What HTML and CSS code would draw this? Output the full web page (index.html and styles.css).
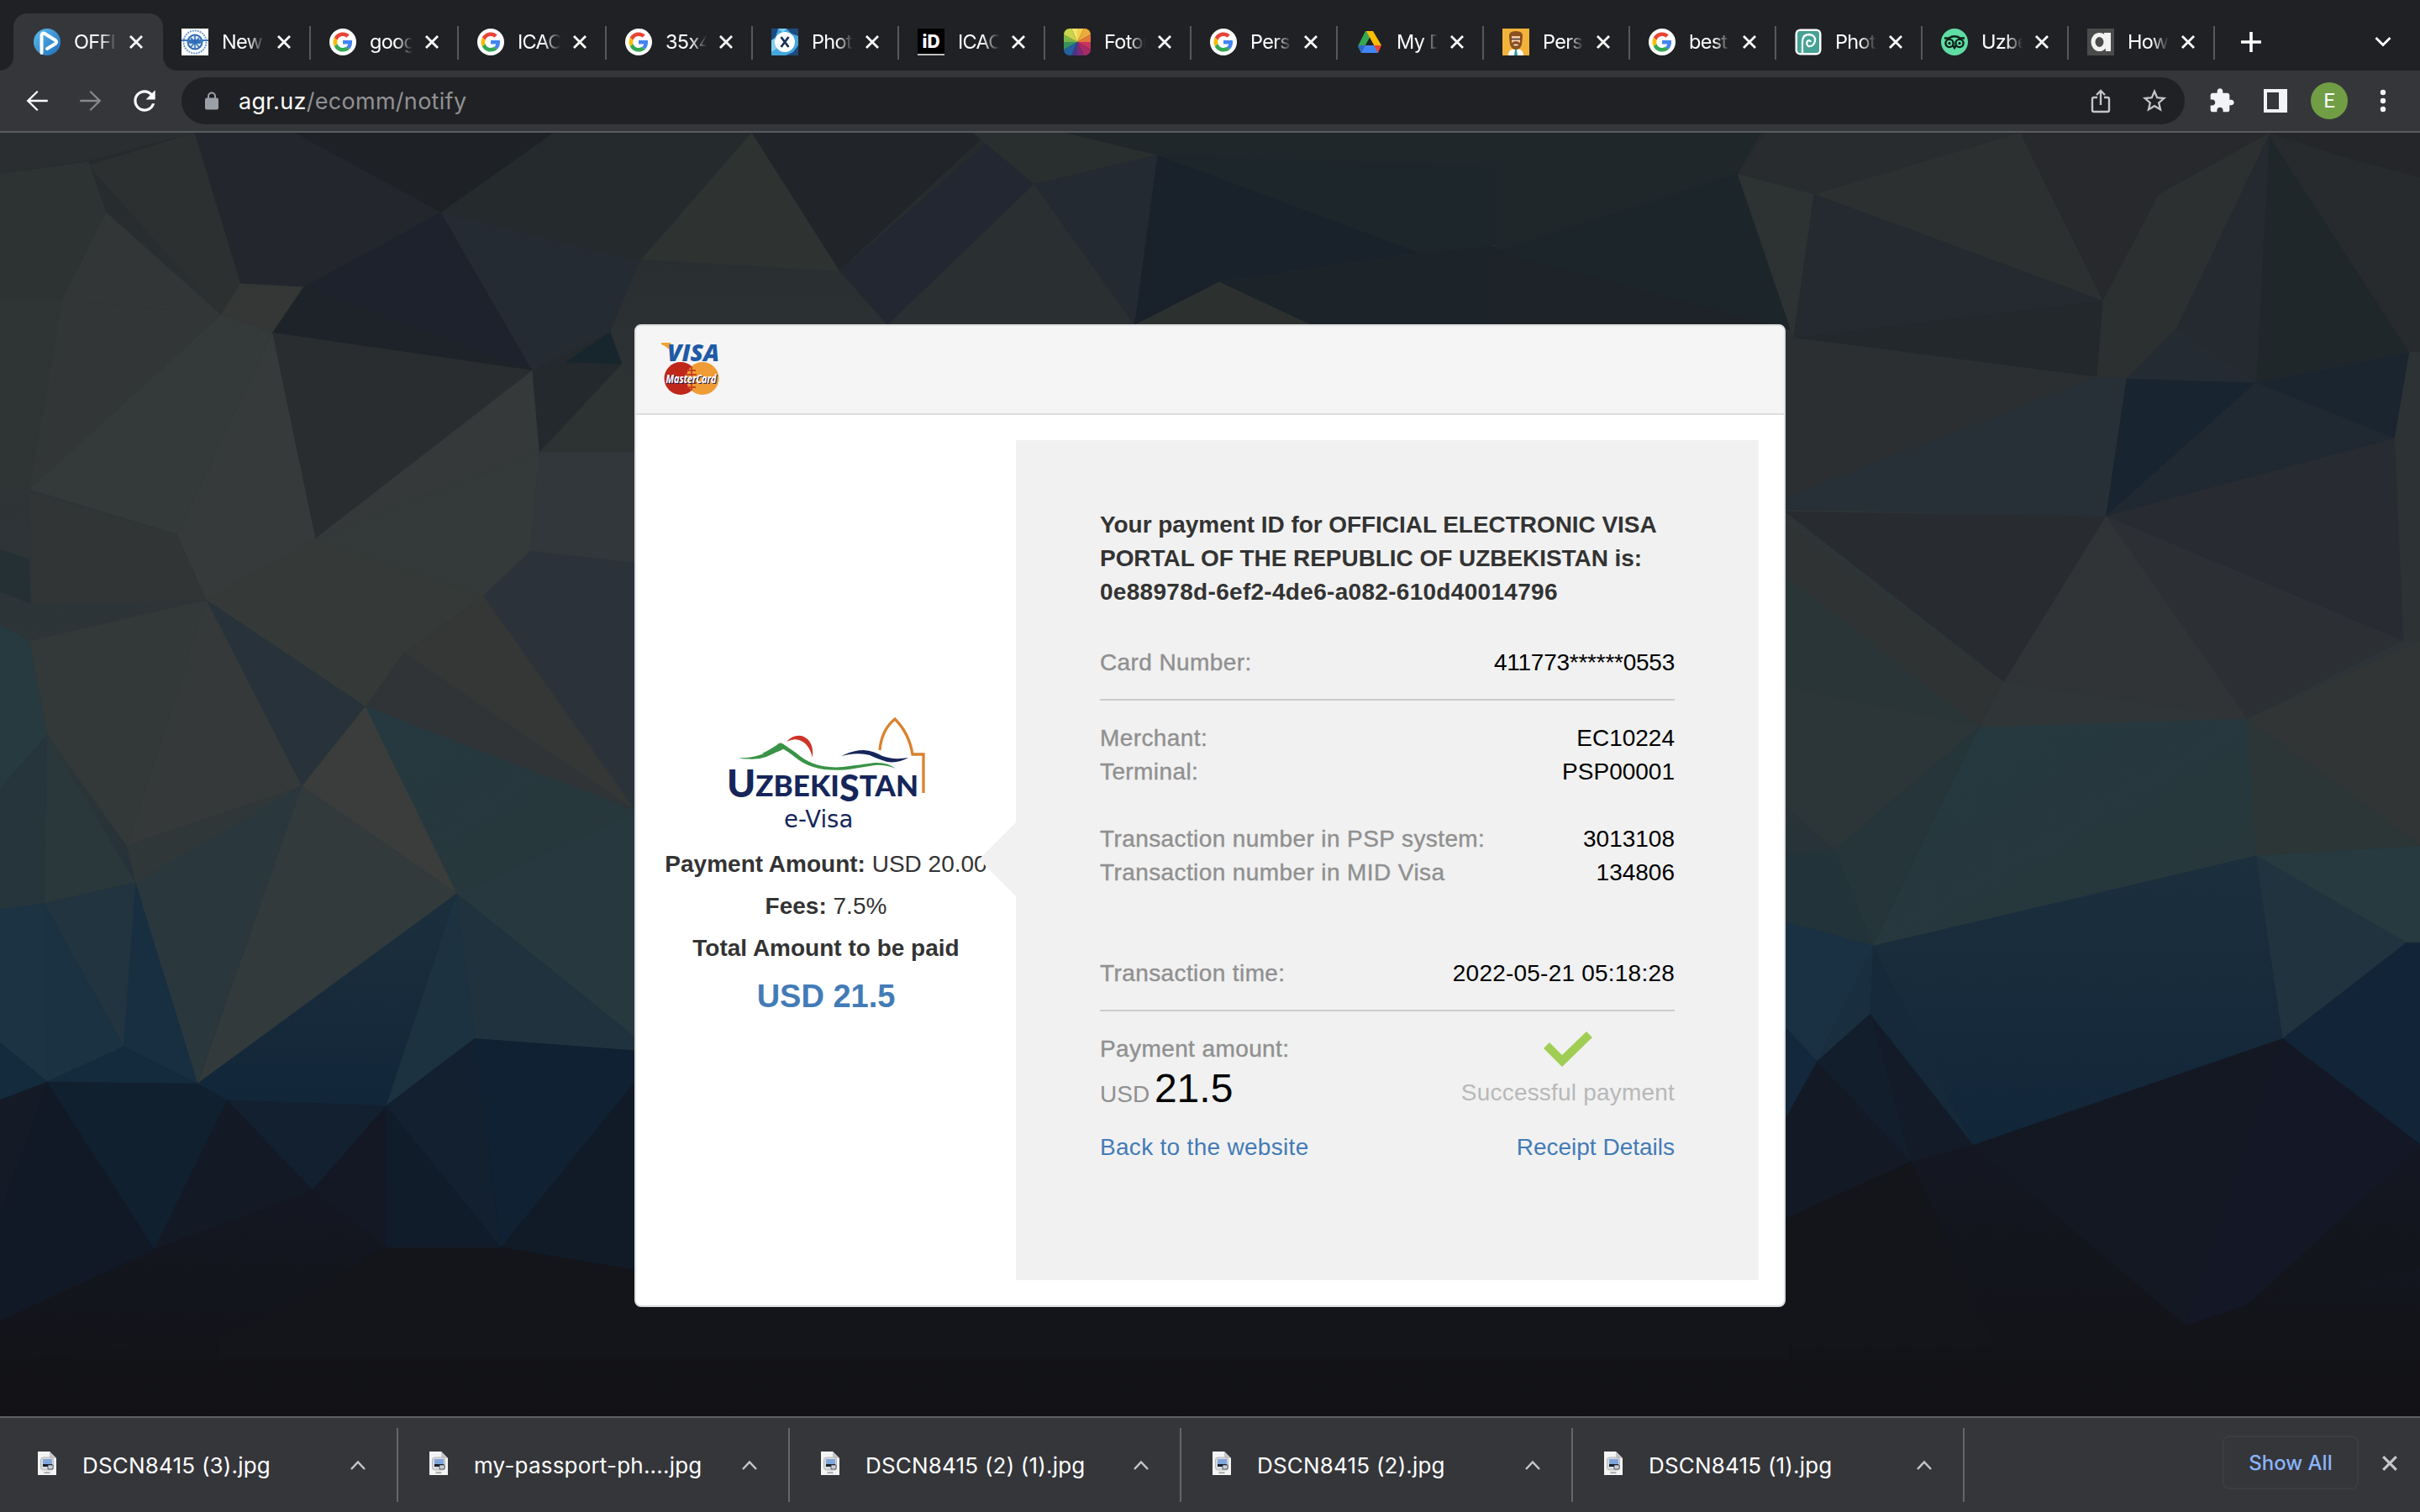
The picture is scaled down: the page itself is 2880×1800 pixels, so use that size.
FILE: index.html
```html
<!DOCTYPE html>
<html lang="en">
<head>
<meta charset="utf-8">
<title>OFFICIAL ELECTRONIC VISA PORTAL</title>
<link rel="stylesheet" href="styles.css">
</head>
<body>
<svg class="defs" aria-hidden="true">
  <symbol id="close" viewBox="0 0 18 18"><path d="M2 2L16 16M16 2L2 16" fill="none" stroke="currentColor" stroke-width="2.8"/></symbol>
  <symbol id="google" viewBox="0 0 32 32"><circle cx="16" cy="16" r="16" fill="#fff"/><g transform="translate(4.5 4.5) scale(.48)"><path fill="#EA4335" d="M24 9.5c3.54 0 6.71 1.22 9.21 3.6l6.85-6.85C35.9 2.38 30.47 0 24 0 14.62 0 6.51 5.38 2.56 13.22l7.98 6.19C12.43 13.72 17.74 9.5 24 9.5z"/><path fill="#4285F4" d="M46.98 24.55c0-1.57-.15-3.09-.38-4.55H24v9.02h12.94c-.58 2.96-2.26 5.48-4.78 7.18l7.73 6c4.51-4.18 7.09-10.36 7.09-17.65z"/><path fill="#FBBC05" d="M10.53 28.59c-.48-1.45-.76-2.99-.76-4.59s.27-3.14.76-4.59l-7.98-6.19C.92 16.46 0 20.12 0 24c0 3.88.92 7.54 2.56 10.78l7.97-6.19z"/><path fill="#34A853" d="M24 48c6.48 0 11.93-2.13 15.89-5.81l-7.73-6c-2.15 1.45-4.92 2.3-8.16 2.3-6.26 0-11.57-4.22-13.47-9.91l-7.98 6.19C6.51 42.62 14.62 48 24 48z"/></g></symbol>
  <symbol id="jpg" viewBox="0 0 24 30"><path d="M1 1H15L23 9V29H1Z" fill="#f4f4f4"/><path d="M15 1V9H23Z" fill="#c4c6c9"/><rect x="4.500" y="8" width="15" height="15" rx="3" fill="#d9dadc" stroke="#aaa" stroke-width=".8"/><rect x="7" y="10" width="11" height="7" fill="#7fa5dc"/><path d="M7 16H18V19H7Z" fill="#15202f"/><path d="M13 17H19V22H13Z" fill="#c8d0dc" stroke="#333" stroke-width=".7"/><path d="M8.500 26.200H15.500" stroke="#aaa" stroke-width="2"/></symbol>
  <symbol id="caret" viewBox="0 0 20 14"><path d="M2 12L10 3.500L18 12" fill="none" stroke="currentColor" stroke-width="2.500"/></symbol>
</svg>

<header class="tabs">
  <div class="tab tab-active">
    <svg class="fav" viewBox="0 0 32 32"><defs><linearGradient id="pl" x2="1" y2="1"><stop stop-color="#5cc0f2"/><stop offset="1" stop-color="#1f6cb8"/></linearGradient></defs><circle cx="16" cy="16" r="16" fill="url(#pl)"/><path d="M9.500 29V8Q10 4 14 6.500L26 14Q28 16 26 18L16 24" fill="none" stroke="#fff" stroke-width="4" stroke-linejoin="round" stroke-linecap="round"/></svg>
    <span class="tab-title">OFFICIAL</span><svg class="x"><use href="#close"/></svg>
  </div>
  <div class="tab wide">
    <svg class="fav" viewBox="0 0 32 32"><path fill="#fff" d="M0 0H32V32H0Z"/><circle cx="16" cy="16" r="13.500" fill="none" stroke="#6f9bd0" stroke-width="2" stroke-dasharray="2 1"/><circle cx="16" cy="16" r="8.500" fill="#dce8f6" stroke="#2f6cb5" stroke-width="2"/><path d="M0 13H32V15H26L22 18H10L6 15H0Z" fill="#3d7ac0"/><path d="M10 16H22M16 8V25M11 11L21 22M21 11L11 22" stroke="#2f6cb5" stroke-width="1.500"/></svg>
    <span class="tab-title">New</span><svg class="x"><use href="#close"/></svg>
  </div>
  <div class="tab wide"><svg class="fav"><use href="#google"/></svg><span class="tab-title">google</span><svg class="x"><use href="#close"/></svg></div>
  <div class="tab wide"><svg class="fav"><use href="#google"/></svg><span class="tab-title">ICAO</span><svg class="x"><use href="#close"/></svg></div>
  <div class="tab"><svg class="fav"><use href="#google"/></svg><span class="tab-title">35x45</span><svg class="x"><use href="#close"/></svg></div>
  <div class="tab">
    <svg class="fav" viewBox="0 0 32 32"><path fill="#45a6dc" d="M0 0H32V32H0Z"/><path fill="#1d4a80" d="M0 0H8L5 10L0 14ZM18 0H32V9L24 6ZM32 20V32H17L26 28Z"/><path fill="#7fd0f2" d="M8 0H18L14 5ZM0 14L4 12L6 24L0 28Z"/><circle cx="16" cy="16" r="12" fill="#fff"/><path d="M11.500 10L20.500 22M20.500 10L11.500 22" stroke="#1b3356" stroke-width="2.800"/></svg>
    <span class="tab-title">Photo</span><svg class="x"><use href="#close"/></svg>
  </div>
  <div class="tab">
    <svg class="fav" viewBox="0 0 32 32"><path d="M0 0H32V32H0Z"/><path d="M0 31H32" stroke="#fff" stroke-width="1.500"/><text class="fav-id" x="16" y="23" text-anchor="middle">iD</text></svg>
    <span class="tab-title">ICAO</span><svg class="x"><use href="#close"/></svg>
  </div>
  <div class="tab">
    <svg class="fav" viewBox="0 0 32 32"><defs><clipPath id="rr"><rect width="32" height="32" rx="7"/></clipPath></defs><g clip-path="url(#rr)"><path fill="#f0e56a" d="M16 16L9 0H16Z"/><path fill="#f6cf4c" d="M16 16V0H24Z"/><path fill="#eeaa3c" d="M16 16L24 0H32V7Z"/><path fill="#e3773a" d="M16 16L32 7V16Z"/><path fill="#c73360" d="M16 16H32V25Z"/><path fill="#a62a66" d="M16 16L32 25V32H24Z"/><path fill="#7a2b78" d="M16 16L24 32H16Z"/><path fill="#46348a" d="M16 16V32H9Z"/><path fill="#24619f" d="M16 16L9 32H0V25Z"/><path fill="#35935f" d="M16 16L0 25V16Z"/><path fill="#7cb547" d="M16 16H0V7Z"/><path fill="#cbd54c" d="M16 16L0 7V0H9Z"/></g></svg>
    <span class="tab-title">Fotor</span><svg class="x"><use href="#close"/></svg>
  </div>
  <div class="tab"><svg class="fav"><use href="#google"/></svg><span class="tab-title">Pers</span><svg class="x"><use href="#close"/></svg></div>
  <div class="tab">
    <svg class="fav" viewBox="0 0 32 32"><path fill="#34A853" d="M11 3H16L16 11L6 29L2 21Z"/><path fill="#FBBC05" d="M12 3H20L30 20H21Z"/><path fill="#4285F4" d="M7 20H25L26 29H6Z"/><path fill="#EA4335" d="M21 20H30L26 29Z"/><path fill="#3068c9" d="M2 20H11L6 29Z"/><path fill="#202124" d="M16 11L21 20H11Z"/></svg>
    <span class="tab-title">My Drive</span><svg class="x"><use href="#close"/></svg>
  </div>
  <div class="tab">
    <svg class="fav" viewBox="0 0 32 32"><path fill="#f2b33a" d="M0 0H32V32H0Z"/><path fill="#fff" d="M7 32Q7 25 13 24.500H19Q25 25 25 32Z"/><path fill="#8c5020" d="M8 10Q7 3 16 3Q25 3 24 10L23 19Q21 25 16 25Q11 25 9 19Z"/><path fill="#f2c7a2" d="M11 9H21V17Q16 13 11 17Z"/><path d="M10.500 12.500H21.500" stroke="#433" stroke-width="1.500"/><path d="M13.500 19.500H18.500" stroke="#fff" stroke-width="1.500"/><path fill="#329b9b" d="M15 25H17L18 32H14Z"/></svg>
    <span class="tab-title">Pers</span><svg class="x"><use href="#close"/></svg>
  </div>
  <div class="tab"><svg class="fav"><use href="#google"/></svg><span class="tab-title">best</span><svg class="x"><use href="#close"/></svg></div>
  <div class="tab">
    <svg class="fav" viewBox="0 0 32 32"><rect x=".5" y=".5" width="31" height="31" rx="6" fill="#fff"/><rect x="3" y="3" width="26" height="26" rx="3" fill="#45a294"/><path d="M9 29V16Q9 7 17 7Q25 8 24 15Q22 22 16 21Q13 18 15 15Q18 13 19 16" fill="none" stroke="#fff" stroke-width="2.300"/></svg>
    <span class="tab-title">Photo</span><svg class="x"><use href="#close"/></svg>
  </div>
  <div class="tab">
    <svg class="fav" viewBox="0 0 32 32"><circle cx="16" cy="16" r="16" fill="#5fdda5"/><g fill="none" stroke="#102018" stroke-width="2.400"><circle cx="10" cy="17.500" r="4.600"/><circle cx="22" cy="17.500" r="4.600"/><path d="M4 11.500H9Q16 7 23 11.500H28M14 20L16 23L18 20"/></g><circle cx="10" cy="17.500" r="1.500"/><circle cx="22" cy="17.500" r="1.500"/></svg>
    <span class="tab-title">Uzbek</span><svg class="x"><use href="#close"/></svg>
  </div>
  <div class="tab">
    <svg class="fav" viewBox="0 0 32 32"><path fill="#4b4b4b" d="M0 0H32V32H0Z"/><ellipse cx="14.500" cy="16" rx="7.500" ry="8.500" fill="none" stroke="#f2f2f2" stroke-width="5"/><path d="M20 5H28V27H22Z" fill="#f2f2f2"/></svg>
    <span class="tab-title">How</span><svg class="x"><use href="#close"/></svg>
  </div>
  <svg class="new-tab" viewBox="0 0 24 24"><path d="M12 0V24M0 12H24" stroke="#fff" stroke-width="3.600"/></svg>
  <svg class="tab-menu" viewBox="0 0 20 14"><path d="M1.500 2L10 10.500L18.500 2" fill="none" stroke="#fff" stroke-width="2.800"/></svg>
</header>

<nav class="toolbar">
  <span class="tool"><svg class="i36" viewBox="0 0 24 24"><path fill="#fff" d="M20.500 11.200H6.800l6.200-6.200L12 4l-8.300 8 8.300 8 1-1L6.800 12.800H20.500z"/></svg></span>
  <span class="tool"><svg class="i36 flip" viewBox="0 0 24 24"><path fill="#87888b" d="M20.500 11.200H6.800l6.200-6.200L12 4l-8.300 8 8.300 8 1-1L6.800 12.800H20.500z"/></svg></span>
  <span class="tool"><svg class="i38" viewBox="0 0 24 24"><path fill="#fff" d="M17.650 6.350C16.200 4.900 14.210 4 12 4c-4.420 0-7.990 3.580-7.990 8s3.570 8 7.990 8c3.730 0 6.840-2.550 7.730-6h-2.080c-.82 2.330-3.040 4-5.650 4-3.310 0-6-2.690-6-6s2.690-6 6-6c1.660 0 3.140.69 4.220 1.780L13 11h7V4l-2.350 2.350z"/></svg></span>
  <div class="omnibox">
    <svg class="lock" viewBox="0 0 16 22"><rect y="7.500" width="16" height="14" rx="2" fill="#9aa0a6"/><path d="M4 9V5.500A4 4 0 0 1 12 5.500V9" fill="none" stroke="#9aa0a6" stroke-width="2"/></svg>
    <span class="url">agr.uz<span class="path">/ecomm/notify</span></span>
    <svg class="i32" viewBox="0 0 32 32"><path d="M12 12H8Q6 12 6 14V27Q6 29 8 29H24Q26 29 26 27V14Q26 12 24 12H20M16 21V4M11 9L16 4L21 9" fill="none" stroke="#c4c5c7" stroke-width="2.400"/></svg>
    <svg class="i34" viewBox="0 0 24 24"><path fill="#c4c5c7" d="M22 9.240l-7.190-.62L12 2 9.190 8.630 2 9.240l5.460 4.730L5.820 21 12 17.270 18.180 21l-1.630-7.030L22 9.240zM12 15.400l-3.760 2.270 1-4.280-3.320-2.880 4.380-.38L12 6.100l1.710 4.040 4.380.38-3.320 2.880 1 4.280L12 15.400z"/></svg>
  </div>
  <span class="tool"><svg class="i32" viewBox="0 0 24 24"><path fill="#f1f3f4" d="M20.500 11H19V7c0-1.100-.9-2-2-2h-4V3.500C13 2.120 11.880 1 10.500 1S8 2.120 8 3.500V5H4c-1.100 0-1.990.9-1.990 2v3.800H3.500c1.490 0 2.700 1.210 2.700 2.700s-1.210 2.700-2.700 2.700H2V20c0 1.100.9 2 2 2h3.800v-1.500c0-1.490 1.210-2.700 2.700-2.700 1.490 0 2.700 1.210 2.700 2.700V22H17c1.100 0 2-.9 2-2v-4h1.500c1.380 0 2.500-1.120 2.500-2.500S21.880 11 20.500 11z"/></svg></span>
  <span class="tool"><svg class="i28" viewBox="0 0 28 28"><path fill="#f1f3f4" fill-rule="evenodd" d="M0 0H28V28H0ZM4 4V24H18V4Z"/></svg></span>
  <span class="avatar">E</span>
  <span class="tool"><svg class="i28" viewBox="0 0 28 28"><g fill="#f1f3f4"><circle cx="14" cy="4" r="3.200"/><circle cx="14" cy="14" r="3.200"/><circle cx="14" cy="24" r="3.200"/></g></svg></span>
</nav>

<main class="page">
  <svg class="facets" viewBox="0 0 2880 1530" preserveAspectRatio="none" aria-hidden="true">
    <defs>
      <linearGradient id="base" x2="0" y2="1"><stop stop-color="#262a2d"/><stop offset=".25" stop-color="#2f3436"/><stop offset=".5" stop-color="#2c3539"/><stop offset=".64" stop-color="#203039"/><stop offset=".75" stop-color="#122130"/><stop offset=".87" stop-color="#131722"/><stop offset=".93" stop-color="#131419"/><stop offset="1" stop-color="#121317"/></linearGradient>
      <linearGradient id="teal" x2="1" y2="1"><stop stop-color="#253940"/><stop offset="1" stop-color="#28373b"/></linearGradient>
      <linearGradient id="deep" x2="0" y2="1"><stop stop-color="#1b2f3d"/><stop offset="1" stop-color="#12263a"/></linearGradient>
      <linearGradient id="low" x2="0" y2="1"><stop stop-color="#141722"/><stop offset="1" stop-color="#131419"/></linearGradient>
    </defs>
    <rect width="2880" height="1530" fill="url(#base)"/>
    <!-- top centre -->
    <g transform="translate(0 -8) scale(1.8367 .9885)">
      <path fill="#212529" d="M487 8H640L544 175Z"/><path fill="#2e3332" d="M487 8L544 175L410 160Z"/><path fill="#222731" d="M544 175L640 20L670 70L575 240Z"/><path fill="#292e2f" d="M630 8H690L750 35L670 70Z"/><path fill="#2a2f31" d="M670 70L735 240H575Z"/><path fill="#232a32" d="M670 70L750 35L735 240Z"/><path fill="#19212b" d="M750 35L920 153L790 188L735 240Z"/><path fill="#1f272b" d="M690 8H1130L1125 60L750 35Z"/><path fill="#1d262b" d="M750 35L1125 60L965 145L920 153Z"/><path fill="#2c312f" d="M790 188L850 240H735Z"/><path fill="#1c242a" d="M790 188L920 153L965 145L975 145V240H850Z"/>
    </g>
    <!-- left side -->
    <g transform="scale(.70153 .97704)">
      <path fill="#23272d" d="M330 0H530L748 97L515 188L408 184Z"/><path fill="#1e2226" d="M500 0H940L748 97Z"/><path fill="#252a2d" d="M940 0H1275L1085 157L748 97Z"/><path fill="#1d222d" d="M515 188L748 97L903 290Z"/><path fill="#1e2329" d="M515 188L903 290L462 244Z"/><path fill="#252b32" d="M748 97L1085 157L1035 243L903 290Z"/><path fill="#2a2d30" d="M462 244L903 290L535 495Z"/>
      <path fill="#2c3031" d="M330 0L408 184L375 222L150 40Z"/><path fill="#2a2e30" d="M0 0H330L155 33L0 50Z"/><path fill="#2d3232" d="M0 50L150 35L180 97L105 204H0Z"/><path fill="#323636" d="M180 97L375 222L105 204Z"/><path fill="#343735" d="M375 222L408 184L515 188L462 244Z"/><path fill="#2f3435" d="M0 204H105L50 430L0 440Z"/><path fill="#333637" d="M105 204L375 222L50 435Z"/><path fill="#34393a" d="M375 222L462 244L300 490L50 435Z"/><path fill="#363a3a" d="M462 244L535 495L350 570L300 490Z"/><path fill="#313536" d="M50 440L300 490L350 570L55 575Z"/><path fill="#253035" d="M0 508L50 520L52 575L0 560Z"/>
      <path fill="#35393a" d="M535 495L915 390L903 290Z"/><path fill="#23292d" d="M903 290L1035 243L1055 282L915 390Z"/><path fill="#17252d" d="M960 280L1035 243L1055 282Z"/><path fill="#2d3233" d="M915 390L1055 282L1100 320V390Z"/><path fill="#34393a" d="M535 495L915 390L900 510L820 565Z"/><path fill="#31373a" d="M915 390H1080V525L900 510Z"/><path fill="#2b3239" d="M900 510L1080 525V825L820 565Z"/><path fill="#353a38" d="M535 495L820 565L685 635L620 700L350 570Z"/><path fill="#353737" d="M685 635L820 565L1075 825Z"/><path fill="#303437" d="M620 700L685 635L1075 825Z"/><path fill="#28323a" d="M350 570L620 700L512 797Z"/><path fill="#353939" d="M350 570L512 797L215 870Z"/><path fill="#303739" d="M512 797L230 915L215 870Z"/><path fill="#333838" d="M350 570L50 620L80 735L215 870Z"/><path fill="#3a3d3b" d="M620 700L775 928L512 797Z"/><path fill="url(#teal)" d="M620 700L1080 828L775 928Z"/><path fill="#333a3c" d="M512 797L775 928L335 1160Z"/><path fill="#2a383e" d="M512 797L335 1160L230 915Z"/>
      <path fill="#263a40" d="M0 600L50 620L80 735L0 800Z"/><path fill="#26343b" d="M0 800L80 735L75 940L0 948Z"/><path fill="#2a373b" d="M80 735L230 915L75 940Z"/><path fill="#21343f" d="M75 940L230 915L210 1115Z"/><path fill="#1a3242" d="M75 940L210 1115L80 1158Z"/><path fill="#1c3343" d="M0 948L75 940L80 1158L0 1110Z"/><path fill="#182f42" d="M230 915L335 1160L210 1115Z"/><path fill="#142a3d" d="M210 1115L335 1160L80 1158ZM0 1110L80 1158L0 1180Z"/><path fill="url(#deep)" d="M775 928L655 1187L385 1180L335 1160Z"/><path fill="#1c3241" d="M775 928L805 1105L655 1187Z"/><path fill="#20323e" d="M775 928L1080 1105V1120L805 1105Z"/><path fill="#27383e" d="M775 928L1080 828V1105Z"/>
      <path fill="#141b27" d="M0 1180L80 1158L0 1320Z"/><path fill="#11202f" d="M80 1158L335 1160L385 1180L262 1362Z"/><path fill="#121926" d="M80 1158L262 1362L0 1450V1320Z"/><path fill="#13202f" d="M385 1180L655 1187L530 1290Z"/><path fill="#131a26" d="M385 1180L530 1290L262 1362Z"/><path fill="#141824" d="M530 1290L655 1187V1360Z"/><path fill="#111c2b" d="M655 1187L850 1360H655Z"/><path fill="#122030" d="M655 1187L805 1105L850 1360Z"/><path fill="#0f2132" d="M805 1105L1080 1120V1155L850 1360Z"/><path fill="#111b28" d="M1080 1155V1388L850 1360Z"/><path fill="url(#low)" d="M262 1362L530 1290L655 1360L370 1470ZM0 1450L262 1362L370 1470L0 1500Z"/><path fill="#14151a" d="M655 1360L850 1360L1080 1388V1500H370V1470Z"/>
    </g>
    <!-- right side -->
    <g transform="translate(1780) scale(.70153 .97704)">
      <path fill="#1f272b" d="M0 0H450L410 50L0 145Z"/><path fill="#1c252a" d="M0 145L410 50L500 240Z"/><path fill="#1e2329" d="M0 145L500 240H0Z"/><path fill="#292c2e" d="M460 0H890L540 75L410 50Z"/><path fill="#2d3232" d="M410 50L540 75L505 250Z"/><path fill="#2c3031" d="M540 75L890 0L1030 205Z"/><path fill="#252930" d="M540 75L1030 205L505 250Z"/><path fill="#22282b" d="M505 250L1030 205L1020 298Z"/><path fill="#27292c" d="M890 0H1313L1125 75L1030 205Z"/><path fill="#2d3031" d="M1313 0L1155 238L1070 300L1020 298L1030 205L1125 75Z"/><path fill="#252930" d="M1313 5L1290 305L1155 238Z"/><path fill="#1f272a" d="M1313 5L1550 268L1290 305Z"/><path fill="#242629" d="M1313 0H1570V60Z"/><path fill="#272b2e" d="M1313 5L1570 55V268H1550Z"/><path fill="#252b32" d="M1155 238L1290 305L1070 300Z"/>
      <path fill="#2b2f31" d="M490 250L1020 298L490 445Z"/><path fill="#263036" d="M490 445L1020 298L1070 300L1035 468L490 460Z"/><path fill="#182430" d="M1070 300L1290 305L1035 468Z"/><path fill="#202831" d="M1290 305L1525 373L1035 468Z"/><path fill="#1b2530" d="M1290 305L1550 268L1525 373Z"/><path fill="#2d3335" d="M1550 268H1570V620H1540L1525 373Z"/><path fill="#282b32" d="M1035 468L1525 373L1540 620Z"/><path fill="#2c3034" d="M1035 468L1540 620L1275 715Z"/><path fill="#313436" d="M1035 468L1275 715L862 670Z"/><path fill="#282b30" d="M490 462L1035 468L862 670Z"/><path fill="#2f3334" d="M490 475L862 670L820 725L490 540Z"/><path fill="#2a3537" d="M490 540L820 725L490 675Z"/><path fill="#303637" d="M862 670L1275 715L820 725Z"/><path fill="#2c3537" d="M490 675L820 725L575 875L490 820Z"/><path fill="url(#teal)" d="M820 725L1275 715L1290 882L640 992Z"/><path fill="#25353a" d="M575 875L820 725L640 992Z"/><path fill="#22333a" d="M490 880L575 875L640 992L490 962Z"/><path fill="#323536" d="M1275 715L1570 620V870Z"/><path fill="#2d3637" d="M1275 715L1570 870L1290 882Z"/>
      <path fill="url(#deep)" d="M640 992L1290 882L810 1235Z"/><path fill="url(#deep)" d="M1290 882L1335 1105L810 1235Z"/><path fill="#21333f" d="M1290 882L1545 988L1335 1105Z"/><path fill="#263a3f" d="M1290 882L1570 870V988H1545Z"/><path fill="#1a3143" d="M490 962L640 992L545 1133L490 1090Z"/><path fill="#15293a" d="M640 992L810 1235L635 1075Z"/><path fill="#192f40" d="M640 992L635 1075L545 1133Z"/><path fill="#122538" d="M1335 1105L1545 988H1570V1235Z"/><path fill="#13283c" d="M490 1090L545 1133L490 1205Z"/><path fill="#121e2c" d="M545 1133L635 1075L705 1255Z"/><path fill="#131a26" d="M545 1133L705 1255L490 1325V1205Z"/><path fill="#131b29" d="M635 1075L810 1235L705 1255Z"/><path fill="#141823" d="M810 1235L1335 1105L1170 1455Z"/><path fill="#141826" d="M1335 1105L1570 1235L1275 1430L1170 1455Z"/><path fill="url(#low)" d="M810 1235L1170 1455L850 1480ZM705 1255L810 1235L850 1480ZM1570 1235V1385L1275 1430Z"/><path fill="#14151a" d="M490 1325L705 1255L850 1480H490Z"/>
    </g>
    <path fill="#14151a" d="M750 1380H2130V1465H750Z"/>
    <path fill="#121317" fill-opacity=".7" d="M0 1462H2880V1530H0Z"/>
  </svg>

  <section class="card">
    <div class="card-head">
      <svg class="brands" viewBox="0 0 70 64"><path d="M0 0H11L15 17Q11 6 0 2Z" fill="#efa32e"/><text class="visa" x="7" y="21.500" textLength="62" lengthAdjust="spacingAndGlyphs">VISA</text><circle cx="23" cy="42.500" r="19.500" fill="#bf271b"/><circle cx="49" cy="42.500" r="19.500" fill="#f09c36"/><path d="M36 28V57M31 33H41M30 38H42M30 48H42M31 53H41" stroke="#c9441f" stroke-width="2"/><text class="mc mc-shade" x="6.500" y="48.500" textLength="60" lengthAdjust="spacingAndGlyphs">MasterCard</text><text class="mc" x="5.500" y="47.500" textLength="60" lengthAdjust="spacingAndGlyphs">MasterCard</text></svg>
    </div>
    <div class="card-body">
      <aside class="summary">
        <svg class="logo" viewBox="0 0 240 150"><path fill="#3a9347" d="M16 54Q42 56 66 37L64.500 36L68 37L84 48Q106 68 140 65Q163 62 178 60Q193 59 203 67Q190 62 178 63Q160 66 142 68.500Q104 71 84 54Q74 46 67.500 43Q46 58 28 55.500Q21 56 16 54Z"/><path fill="#3a9347" d="M44 49Q58 42 64.500 36.500L71 42L67 45Q58 50 44 49Z"/><path fill="#cd3427" d="M73 35Q81 26 91 28Q106 33 104 54Q100 37 88 33Q81 31 73 35Z"/><path fill="#16265a" d="M138 52Q152 45 165 45Q177 46 187 52Q200 57 218 54Q206 61 193 59Q180 55 172 51Q158 47 138 52Z"/><path d="M184 45Q186 21 202 8Q219 25 223 50H236V96" fill="none" stroke="#d9822f" stroke-width="3.300"/>
          <text class="country" x="2" y="101" textLength="228" lengthAdjust="spacingAndGlyphs"><tspan font-size="46">U</tspan><tspan font-size="35" dy="-1">ZBEKI</tspan><tspan font-size="43" dy="6">S</tspan><tspan font-size="35" dy="-6">TAN</tspan></text>
          <text class="evisa" x="70" y="137">e-Visa</text></svg>
        <p><b>Payment Amount:</b> USD 20.00</p>
        <p><b>Fees:</b> 7.5%</p>
        <p><b>Total Amount to be paid</b></p>
        <p class="total">USD 21.5</p>
      </aside>
      <div class="details">
        <h1>Your payment ID for OFFICIAL ELECTRONIC VISA PORTAL OF THE REPUBLIC OF UZBEKISTAN is: <span class="payment-id">0e88978d-6ef2-4de6-a082-610d40014796</span></h1>
        <div class="row first"><span>Card Number:</span><b class="pan">411773******0553</b></div>
        <hr>
        <div class="row"><span>Merchant:</span><b>EC10224</b></div>
        <div class="row"><span>Terminal:</span><b>PSP00001</b></div>
        <div class="row gap1"><span>Transaction number in PSP system:</span><b>3013108</b></div>
        <div class="row"><span>Transaction number in MID Visa</span><b>134806</b></div>
        <div class="row gap2"><span>Transaction time:</span><b class="time">2022-05-21 05:18:28</b></div>
        <hr>
        <div class="result">
          <div><div class="amount-label">Payment amount:</div><div class="amount">USD <b>21.5</b></div></div>
          <div class="ok"><svg viewBox="0 0 58 42"><path d="M0 20L7 13L22 28L51 0L58 7L22 42Z" fill="#a0cd54"/></svg><div>Successful payment</div></div>
        </div>
        <div class="row links"><a>Back to the website</a><a>Receipt Details</a></div>
      </div>
    </div>
  </section>
</main>

<footer class="downloads">
  <div class="dl"><svg class="file"><use href="#jpg"/></svg><span>DSCN8415 (3).jpg</span><svg class="caret"><use href="#caret"/></svg></div>
  <div class="dl"><svg class="file"><use href="#jpg"/></svg><span>my-passport-ph....jpg</span><svg class="caret"><use href="#caret"/></svg></div>
  <div class="dl"><svg class="file"><use href="#jpg"/></svg><span>DSCN8415 (2) (1).jpg</span><svg class="caret"><use href="#caret"/></svg></div>
  <div class="dl"><svg class="file"><use href="#jpg"/></svg><span>DSCN8415 (2).jpg</span><svg class="caret"><use href="#caret"/></svg></div>
  <div class="dl"><svg class="file"><use href="#jpg"/></svg><span>DSCN8415 (1).jpg</span><svg class="caret"><use href="#caret"/></svg></div>
  <button class="show-all">Show All</button>
  <svg class="dl-close"><use href="#close"/></svg>
</footer>
</body>
</html>
```
FILE: styles.css
```css
* { box-sizing: border-box; }
body {
  margin: 0;
  width: 2880px;
  height: 1800px;
  overflow: hidden;
  display: flex;
  flex-direction: column;
  font-family: "Inter", sans-serif;
  background: #35363a;
}
svg { display: block; flex: none; }
.defs { position: absolute; width: 0; height: 0; }

/* tab strip */
.tabs {
  height: 84px;
  flex: none;
  display: flex;
  align-items: stretch;
  padding: 16px 34px 0 16px;
  background: #202124;
}
.tab {
  position: relative;
  width: 174px;
  display: flex;
  align-items: center;
  padding: 0 23px 0 22px;
  color: #fff;
}
.tab.wide { width: 176px; }
.tab::after {
  content: "";
  position: absolute;
  right: 0;
  top: 15px;
  width: 2px;
  height: 40px;
  background: #56585c;
}
.tab-active {
  width: 178px;
  padding-left: 24px;
  background: #35363a;
  border-radius: 16px 16px 0 0;
}
.tab-active::before, .tab-active::after {
  content: "";
  position: absolute;
  top: auto;
  bottom: 0;
  width: 16px;
  height: 16px;
}
.tab-active::before { left: -16px; background: radial-gradient(circle at 0 0, transparent 15.500px, #35363a 16px); }
.tab-active::after { right: -16px; background: radial-gradient(circle at 100% 0, transparent 15.500px, #35363a 16px); }
.fav { width: 32px; height: 32px; }
.fav-id { font: 800 21px "Inter", sans-serif; fill: #fff; }
.tab-title {
  flex: 1;
  margin: 0 14px 0 16px;
  overflow: hidden;
  white-space: nowrap;
  font-size: 23.500px;
  letter-spacing: -.7px;
  line-height: 34px;
  -webkit-mask-image: linear-gradient(90deg, #000 60%, transparent 100%);
  mask-image: linear-gradient(90deg, #000 60%, transparent 100%);
}
.x { width: 18px; height: 18px; }
.new-tab { width: 24px; height: 24px; align-self: center; margin-left: 31px; }
.tab-menu { width: 20px; height: 14px; align-self: center; margin-left: auto; }

/* toolbar */
.toolbar {
  height: 74px;
  flex: none;
  display: flex;
  align-items: center;
  gap: 24px;
  padding: 0 24px;
  background: #35363a;
  border-bottom: 2px solid #5b5c60;
}
.tool { width: 40px; height: 40px; display: flex; align-items: center; justify-content: center; }
.i28 { width: 28px; height: 28px; }
.i32 { width: 32px; height: 32px; }
.i34 { width: 34px; height: 34px; }
.i36 { width: 36px; height: 36px; }
.i38 { width: 38px; height: 38px; }
.flip { transform: scaleX(-1); }
.omnibox {
  flex: 1;
  height: 56px;
  display: flex;
  align-items: center;
  gap: 31px;
  padding: 0 19px 0 28px;
  border-radius: 28px;
  background: #202124;
}
.lock { width: 16px; height: 22px; }
.url { flex: 1; margin-left: -7px; font-size: 27px; letter-spacing: .3px; color: #fff; }
.path { color: #909194; }
.avatar {
  width: 44px;
  height: 44px;
  margin: 0 -2px;
  border-radius: 50%;
  background: #719d45;
  color: #fff;
  font: 24px/44px "Roboto", sans-serif;
  text-align: center;
}

/* page */
.page {
  position: relative;
  flex: 1;
  font: 28px/40px "Liberation Sans", Arial, sans-serif;
  color: #333;
}
.facets { position: absolute; inset: 0; width: 100%; height: 100%; }
.card {
  position: relative;
  width: 1370px;
  height: 1170px;
  margin: 228px 0 0 755px;
  border: 2px solid #ddd;
  border-radius: 8px;
  background: #fff;
  overflow: hidden;
}
.card-head {
  height: 106px;
  padding: 20px 30px;
  background: #f5f5f5;
  border-bottom: 2px solid #ddd;
}
.brands { width: 70px; height: 64px; }
.visa { font: italic 800 29px "Open Sans", sans-serif; fill: #1f5aa6; }
.mc { font: italic 700 13.500px "Open Sans", sans-serif; fill: #fff; }
.mc-shade { fill: #1b1b50; }
.card-body { display: flex; padding: 30px 30px 30px 0; }
.summary { width: 452px; padding-top: 324px; text-align: center; white-space: nowrap; }
.logo { width: 240px; height: 150px; margin: 0 auto 11px; }
.country { font-family: "Lato", sans-serif; font-weight: 900; fill: #16265a; }
.evisa { font: 27.500px "DejaVu Sans", sans-serif; fill: #16265a; }
.summary p { margin: 0 0 10px; }
.summary .total { margin-top: 17px; font-size: 38px; font-weight: bold; color: #437bb7; }
.details {
  position: relative;
  width: 884px;
  height: 1000px;
  padding: 81px 100px 0;
  background: #f1f1f1;
}
.details::before {
  content: "";
  position: absolute;
  left: -44px;
  top: 455px;
  width: 44px;
  height: 88px;
  background: #f1f1f1;
  clip-path: polygon(100% 0, 0 50%, 100% 100%);
}
h1 { margin: 0; font-size: 28px; line-height: 40px; letter-spacing: -.05px; }
.payment-id { letter-spacing: .3px; }
.row { display: flex; justify-content: space-between; color: #909090; }
.row span, .amount-label { letter-spacing: .4px; -webkit-text-stroke: .4px #909090; }
.row b { font-weight: normal; color: #000; }
.row .pan { letter-spacing: -.25px; }
.row .time { letter-spacing: .22px; }
.first { margin-top: 44px; }
.gap1 { margin-top: 40px; }
.gap2 { margin-top: 80px; }
hr { height: 2px; margin: 23px 0 25px; border: 0; background: #ccc; }
.result { display: flex; justify-content: space-between; color: #909090; }
.amount { margin-top: -1px; line-height: 56px; }
.amount b { font-size: 48px; font-weight: normal; color: #000; margin-left: -2px; }
.ok { display: flex; flex-direction: column; align-items: center; color: #b8b8b8; letter-spacing: .2px; }
.ok svg { width: 58px; height: 42px; margin: -1px 0 11px; }
.links { margin-top: 15px; }
.links a { color: #437bb7; }
.links a:first-child { letter-spacing: .3px; }

/* downloads */
.downloads {
  height: 114px;
  flex: none;
  display: flex;
  border-top: 2px solid #606165;
  background: #35363a;
  color: #fff;
}
.dl {
  width: 466px;
  height: 88px;
  margin-top: 12px;
  display: flex;
  align-items: center;
  padding: 0 36px 0 44px;
  border-right: 2px solid #65666a;
}
.dl:first-child { width: 474px; }
.dl + .dl { padding-left: 36px; }
.file { width: 24px; height: 30px; margin-top: -4px; }
.dl span { flex: 1; margin-left: 30px; font-size: 26px; letter-spacing: .2px; white-space: nowrap; }
.caret { width: 20px; height: 14px; color: #c6c7c9; }
.show-all {
  width: 162px;
  height: 64px;
  margin: 21px 27px 0 auto;
  padding: 0;
  border: 2px solid #3c3d41;
  border-radius: 8px;
  background: none;
  color: #8ab4f8;
  font: 500 24px "Inter", sans-serif;
}
.dl-close { width: 20px; height: 20px; margin: 44px 26px 0 0; color: #c6c7c9; }
```
